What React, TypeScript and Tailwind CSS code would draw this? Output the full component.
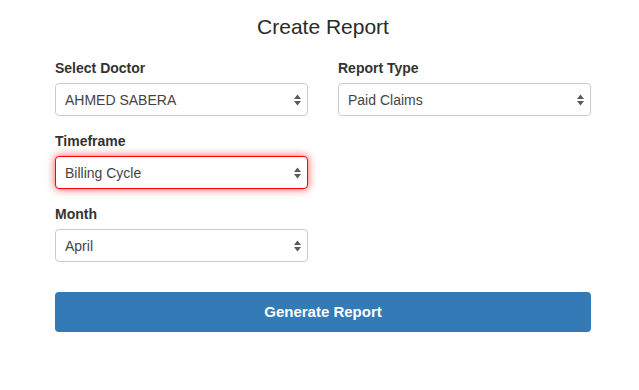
import React from "react";

function Arrows() {
  return (
    <svg width="7" height="12" viewBox="0 0 7 12" className="shrink-0">
      <polygon points="3.5,0.5 7,5 0,5" fill="#5a5a5a" />
      <polygon points="0,7 7,7 3.5,11.5" fill="#5a5a5a" />
    </svg>
  );
}

function Select({ value, focused }: { value: string; focused?: boolean }) {
  return (
    <div
      className={
        focused
          ? "flex h-[33px] items-center justify-between rounded-[4px] border border-[#ff0000] bg-white pl-[9px] pr-[6px] shadow-[0_0_8px_rgba(255,0,0,0.7)]"
          : "flex h-[33px] items-center justify-between rounded-[4px] border border-[#cccccc] bg-white pl-[9px] pr-[6px]"
      }
    >
      <span className="text-[14px] leading-[20px] text-[#444]">{value}</span>
      <Arrows />
    </div>
  );
}

function Field({ label, value, focused }: { label: string; value: string; focused?: boolean }) {
  return (
    <div className="flex flex-col">
      <label className="mb-[5px] text-[14px] font-bold leading-[20px] text-[#333]">{label}</label>
      <Select value={value} focused={focused} />
    </div>
  );
}

export default function App() {
  return (
    <div
      className="min-h-[390px] w-[639px] bg-white"
      style={{ fontFamily: '"Liberation Sans", Arial, sans-serif' }}
    >
      <div className="ml-[55px] flex w-[536px] flex-col pt-[15px]">
        <h1 className="text-center text-[21px] leading-[24px] text-[#2a2a2a]">Create Report</h1>
        <div className="mt-[19px] grid grid-cols-[253px_253px] gap-x-[30px]">
          <Field label="Select Doctor" value="AHMED SABERA" />
          <Field label="Report Type" value="Paid Claims" />
        </div>
        <div className="mt-[15px] w-[253px]">
          <Field label="Timeframe" value="Billing Cycle" focused />
        </div>
        <div className="mt-[15px] w-[253px]">
          <Field label="Month" value="April" />
        </div>
        <button className="mt-[30px] h-[40px] w-full rounded-[4px] bg-[#337ab7] text-[15px] font-bold text-white">
          Generate Report
        </button>
      </div>
    </div>
  );
}
